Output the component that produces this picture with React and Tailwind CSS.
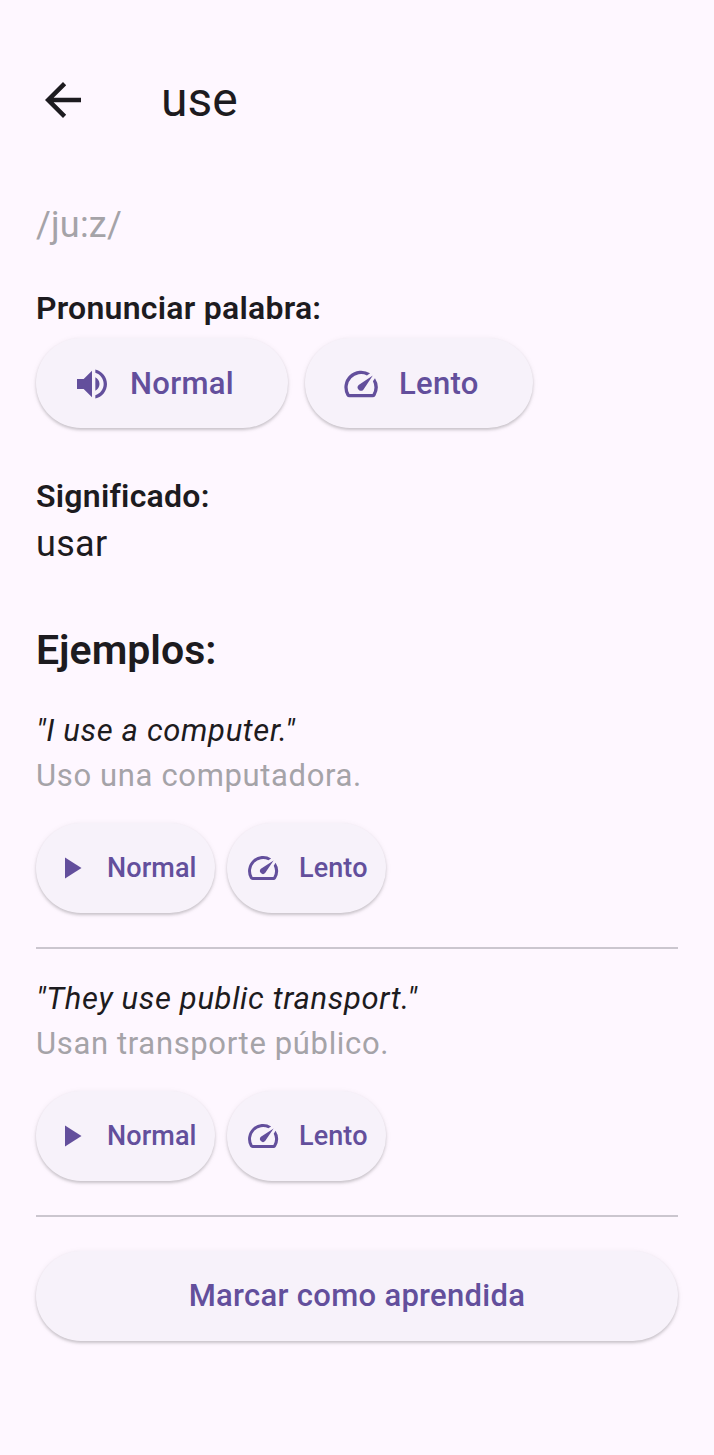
const BACK = 'M20 11H7.83l5.59-5.59L12 4l-8 8 8 8 1.41-1.41L7.83 13H20v-2z'
const VOLUME = 'M3 9v6h4l5 5V4L7 9H3zm13.5 3c0-1.77-1.02-3.29-2.5-4.03v8.05c1.48-.73 2.5-2.25 2.5-4.02zM14 3.23v2.06c2.89.86 5 3.54 5 6.71s-2.11 5.85-5 6.71v2.06c4.01-.91 7-4.49 7-8.77s-2.99-7.86-7-8.77z'
const SPEED = 'M20.38 8.57l-1.23 1.85a8 8 0 0 1-.22 7.58H5.07A8 8 0 0 1 15.58 6.85l1.85-1.23A10 10 0 0 0 3.35 19a2 2 0 0 0 1.72 1h13.85a2 2 0 0 0 1.74-1 10 10 0 0 0-.27-10.44zm-9.79 6.84a2 2 0 0 0 2.83 0l5.66-8.49-8.49 5.66a2 2 0 0 0 0 2.83z'
const PLAY = 'M8 5v14l11-7z'

function Icon({ d, className }) {
  return (
    <svg viewBox="0 0 24 24" fill="currentColor" className={className}>
      <path d={d} />
    </svg>
  )
}

const pill = 'flex items-center bg-[#f7f2fa] text-[#634f9c] rounded-full h-[90px] font-[480] shadow-[0_2px_3px_rgba(0,0,0,0.18),0_1px_6px_rgba(0,0,0,0.06)]'

function SmallButton({ d, label, className, gap }) {
  return (
    <div className={`${pill} ${className} text-[27px] tracking-[0.1px]`}>
      <Icon d={d} className="w-[36px] h-[36px] shrink-0" />
      <span className={gap}>{label}</span>
    </div>
  )
}

function Example({ en, es }) {
  return (
    <div>
      <p className="italic text-[31px] leading-[45px] tracking-[0.65px] text-[#1d1b20]">{en}</p>
      <p className="text-[31px] leading-[45px] tracking-[0.65px] text-[#a5a3a8]">{es}</p>
      <div className="flex gap-[12px] mt-[25px]">
        <SmallButton d={PLAY} label="Normal" className="w-[179px] pl-[17px]" gap="ml-[18px]" />
        <SmallButton d={SPEED} label="Lento" className="w-[159px] pl-[18px]" gap="ml-[18px]" />
      </div>
      <div className="h-[2px] bg-[#cbc6cf] mt-[34px]" />
    </div>
  )
}

export default function App() {
  return (
    <div className="w-[714px] h-[1455px] bg-[#fef7ff] text-[#1d1b20] px-[36px] pt-[73px] font-['Roboto',sans-serif]">
      {/* App bar */}
      <div className="flex items-center h-[54px]">
        <Icon d={BACK} className="w-[54px] h-[54px] shrink-0" />
        <h1 className="ml-[71px] text-[48px] leading-[54px]">use</h1>
      </div>

      <p className="mt-[73px] text-[36px] leading-[50px] tracking-[0.2px] text-[#a5a3a8]">/ju:z/</p>

      <p className="mt-[38px] text-[32px] leading-[40px] font-semibold tracking-[0.25px]">Pronunciar palabra:</p>
      <div className="flex gap-[17px] mt-[10px]">
        <div className={`${pill} w-[252px] pl-[36px] pt-[2px] text-[31px] tracking-[0.3px]`}>
          <Icon d={VOLUME} className="w-[40px] h-[40px] shrink-0" />
          <span className="ml-[18px]">Normal</span>
        </div>
        <div className={`${pill} w-[228px] pl-[36px] pt-[2px] text-[31px] tracking-[0.3px]`}>
          <Icon d={SPEED} className="w-[40px] h-[40px] shrink-0" />
          <span className="ml-[18px]">Lento</span>
        </div>
      </div>

      <p className="mt-[48px] text-[32px] leading-[40px] font-semibold tracking-[0.25px]">Significado:</p>
      <p className="mt-[4px] text-[36px] leading-[48px] tracking-[0.3px]">usar</p>

      <h2 className="mt-[54px] text-[41px] leading-[56px] font-semibold">Ejemplos:</h2>

      <div className="mt-[30px] flex flex-col gap-[27px]">
        <Example en={'"I use a computer."'} es="Uso una computadora." />
        <Example en={'"They use public transport."'} es="Usan transporte público." />
      </div>

      <div className={`${pill} justify-center mt-[34px] text-[31px] tracking-[0.3px]`}>Marcar como aprendida</div>
    </div>
  )
}
